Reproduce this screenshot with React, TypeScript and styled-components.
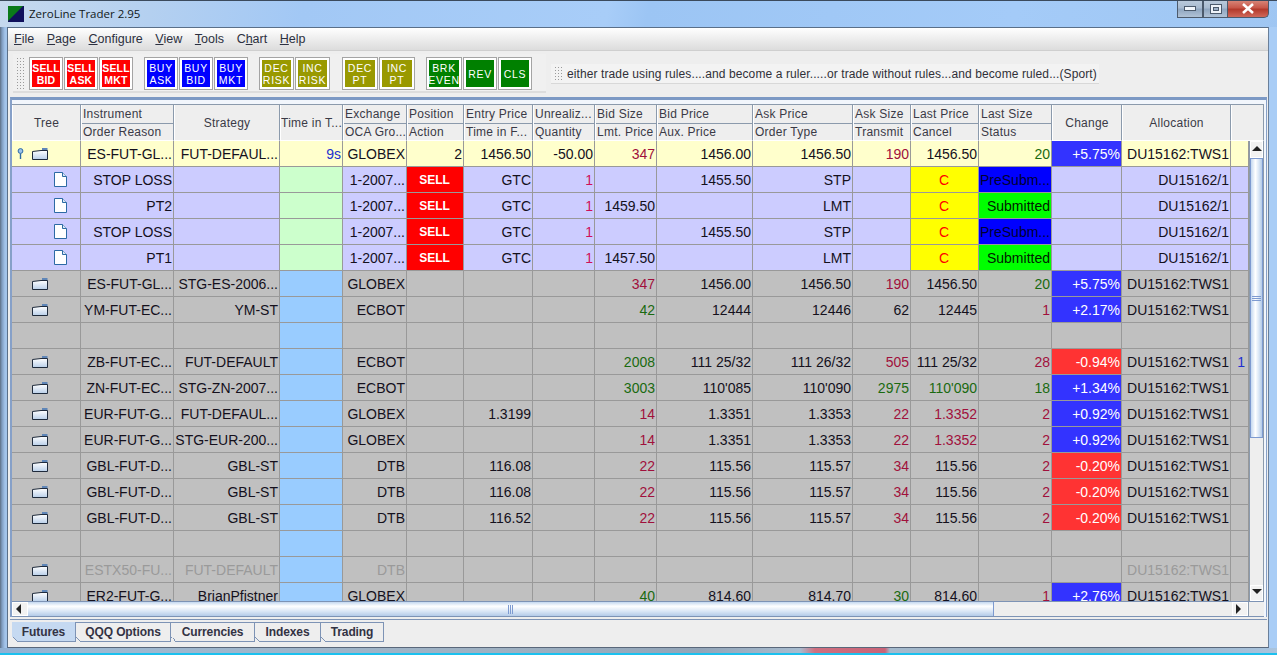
import React from "react";
import styled, { createGlobalStyle } from "styled-components";

const GlobalStyle = createGlobalStyle`
  html, body { margin: 0; padding: 0; background: #a9cdf6; overflow: hidden; }
  * { box-sizing: border-box; }
`;

const COLS = "69px 93px 106px 63px 64px 57px 69px 62px 62px 96px 100px 58px 68px 73px 70px 109px 18px";

const Window = styled.div`
  width: 1277px;
  height: 655px;
  display: flex;
  flex-direction: column;
  padding: 0 7px 0 7px;
  font-family: "Liberation Sans", Arial, sans-serif;
  background: linear-gradient(90deg, #5d6f84 0, #7f9cc0 2px, #a3c4ea 5px, #a9cdf6 100%);
  border-top: 1px solid #3b4a5c;
  border-bottom: 2px solid #1cc0ee;
  overflow: hidden;
`;

const TitleBar = styled.div`
  height: 26px;
  flex: none;
  display: flex;
  align-items: flex-start;
  margin: 0 -7px 0 -7px;
  padding-left: 8px;
  background: linear-gradient(100deg, #c6d9ee 0, #b4d0f0 150px, #a2c8f5 300px, #a8cdf8 600px, #9cc5f4 640px, #a4cbf8 1000px, #9fc6f2 1277px);
`;

const AppIcon = styled.svg`
  width: 16px;
  height: 16px;
  margin-top: 5px;
  flex: none;
`;

const AppTitle = styled.div`
  margin: 5px 0 0 5px;
  font: 11.5px/16px "Open Sans", "Noto Sans", sans-serif;
  color: #101820;
`;

const WinButtons = styled.div`
  margin-left: auto;
  margin-right: 8px;
  display: flex;
  height: 18px;
  margin-top: -1px;
`;

const WinButton = styled.div<{ $w: number; $close?: boolean }>`
  width: ${(p) => p.$w}px;
  height: 18px;
  display: flex;
  align-items: center;
  justify-content: center;
  border: 1px solid #4c5a6c;
  border-top: none;
  border-left-width: ${(p) => (p.$close ? 0 : 1)}px;
  border-radius: ${(p) => (p.$close ? "0 0 5px 0" : "0")};
  background: ${(p) =>
    p.$close
      ? "linear-gradient(#d98a7c 0, #c8584a 45%, #b33a2c 55%, #d0685a 100%)"
      : "linear-gradient(#bccbdc 0, #a9bbd0 45%, #90a6c0 55%, #b0c2d6 100%)"};
`;

const Content = styled.div`
  flex: none;
  height: 621px;
  display: flex;
  flex-direction: column;
  background: #eeeeee;
  border: 1px solid #5a6f88;
  border-bottom: 1px solid #59677a;
  border-right: 1px solid #6a7f99;
  margin-right: 1px;
`;

const BottomGlow = styled.div`
  flex: 1;
  margin: 0 -7px;
  background: linear-gradient(90deg, #8fb0d4 0, #9fb9d2 80px, #9fb1c2 500px, #93a5b8 700px, #a8bccf 800px, #cf6f7f 815px, #c96478 885px, #a5bacd 890px, #98abbd 1100px, #a9c4de 1277px);
`;

const MenuBar = styled.div`
  height: 23px;
  flex: none;
  display: flex;
  gap: 12.6px;
  align-items: center;
  padding: 0 0 0 6px;
  background: linear-gradient(#ffffff 0, #f4f4f4 30%, #dcdcdc 100%);
  border-bottom: 1px solid #cfcfcf;
`;

const MenuItem = styled.span`
  font-size: 12.5px;
  color: #2c3040;
  & u { text-decoration: underline; }
`;

const ToolRow = styled.div`
  height: 46px;
  flex: none;
  display: flex;
  align-items: flex-start;
  padding: 3px 0 0 5px;
`;

const ToolBar = styled.div`
  width: 533px;
  height: 39px;
  display: flex;
  padding: 3px 0 0 3px;
  background: #f0f0f0;
  border-bottom: 2px solid #dddddd;
`;

const Grip = styled.div<{ $w: number; $h: number }>`
  width: ${(p) => p.$w}px;
  height: ${(p) => p.$h}px;
  flex: none;
  background-image: radial-gradient(#9a9a9a 0.7px, transparent 0.8px);
  background-size: 3px 3px;
`;

const ButtonGroup = styled.div<{ $ml: number }>`
  display: flex;
  gap: 1px;
  margin-left: ${(p) => p.$ml}px;
`;

const ToolButton = styled.div<{ $w: number; $bg: string; $bold?: boolean }>`
  width: ${(p) => p.$w}px;
  height: 33px;
  border: 1px solid #a4a4a4;
  padding: 2px;
  background: #fff;
  & > div {
    width: 100%;
    height: 100%;
    background: ${(p) => p.$bg};
    color: #fff;
    display: flex;
    flex-direction: column;
    align-items: center;
    justify-content: center;
    font-size: 10.5px;
    line-height: 12px;
    font-weight: ${(p) => (p.$bold ? 700 : 400)};
    letter-spacing: ${(p) => (p.$bold ? 0.2 : 0.7)}px;
  }
`;

const Ticker = styled.div`
  margin: 10px 0 0 5px;
  width: 548px;
  height: 20px;
  display: flex;
  align-items: center;
  gap: 3px;
  padding-left: 3px;
  background: #f3f3f3;
  border-bottom: 1px solid #d8d8d8;
  font-size: 12px;
  letter-spacing: 0.1px;
  color: #303038;
  white-space: nowrap;
`;

const TablePanel = styled.div`
  flex: none;
  margin: 0 1px 0 2px;
  padding: 4px 2px 0 0;
  height: 520px;
  border: 1px solid #86a0c8;
  border-top: 3px solid #7c99c4;
  border-left-width: 2px;
  border-bottom: none;
  background: #f2f6fc;
  display: flex;
  flex-direction: column;
`;

const HeaderRow = styled.div`
  display: grid;
  grid-template-columns: ${COLS.replace(/18px$/, "33px")};
  height: 37px;
  flex: none;
  border-top: 1px solid #8b9aac;
`;

const HeadCell = styled.div`
  background: #eeeeee;
  border-right: 1px solid #8b9aac;
  border-bottom: 1px solid #ffffff;
  border-left: 1px solid #fff;
  display: flex;
  flex-direction: column;
  overflow: hidden;
`;

const HeadLabel = styled.div<{ $line?: boolean; $single?: boolean }>`
  flex: 1;
  display: flex;
  align-items: center;
  justify-content: ${(p) => (p.$single ? "center" : "flex-start")};
  padding-left: ${(p) => (p.$single ? 0 : 1)}px;
  padding-top: ${(p) => (p.$line ? 1 : 0)}px;
  font-size: 12px;
  letter-spacing: 0.25px;
  color: #3a3a46;
  white-space: nowrap;
  border-bottom: ${(p) => (p.$line ? "1px solid #8b9aac" : "none")};
`;

const GridArea = styled.div`
  flex: 1;
  min-height: 0;
  display: flex;
`;

const Rows = styled.div`
  width: 1237px;
  flex: none;
  overflow: hidden;
`;

const Row = styled.div<{ $bg: string }>`
  display: grid;
  grid-template-columns: ${COLS};
  height: 26px;
  background: ${(p) => p.$bg};
`;

const Cell = styled.div<{ $bg?: string; $color?: string; $align?: string; $bold?: boolean }>`
  display: flex;
  align-items: center;
  justify-content: ${(p) => p.$align || "flex-end"};
  padding: 0 1px 0 0;
  border-right: 1px solid #999999;
  border-bottom: 1px solid #999999;
  background: ${(p) => p.$bg || "transparent"};
  color: ${(p) => p.$color || "#14101c"};
  font-size: ${(p) => (p.$bold ? 12 : 14)}px;
  font-weight: ${(p) => (p.$bold ? 700 : 400)};
  white-space: nowrap;
  overflow: hidden;
`;

const ExtraCell = styled(Cell)`
  padding-right: 3px;
`;

const TreeCell = styled(Cell)<{ $pad: number }>`
  justify-content: flex-start;
  padding: 0 0 0 ${(p) => p.$pad}px;
`;

const PinSlot = styled.svg`
  width: 7px;
  height: 11px;
  margin-right: 8px;
`;

const VScroll = styled.div`
  width: 15px;
  flex: none;
  display: flex;
  flex-direction: column;
  background: #eeeeee;
  border-left: 1px solid #8b9aac;
  border-right: 1px solid #8b9aac;
`;

const ArrowBox = styled.div<{ $w: number; $h: number }>`
  width: ${(p) => p.$w}px;
  height: ${(p) => p.$h}px;
  flex: none;
  display: flex;
  align-items: center;
  justify-content: center;
  background: #f2f2f2;
  border: 1px solid #fff;
`;

const VThumb = styled.div`
  height: 280px;
  flex: none;
  display: flex;
  flex-direction: column;
  align-items: center;
  justify-content: center;
  gap: 1px;
  background: linear-gradient(90deg, #c4d8f0 0, #ffffff 40%, #dbe7f6 70%, #b4cbe8 100%);
  border: 1px solid #7d9ad0;
`;

const GripLine = styled.div`
  width: 9px;
  height: 1px;
  background: #7d9ad0;
`;

const Track = styled.div`
  flex: 1;
`;

const HScroll = styled.div`
  height: 16px;
  flex: none;
  display: flex;
  background: #eeeeee;
  border-top: 1px solid #7d93b5;
  border-bottom: 1px solid #7d93b5;
`;

const HThumb = styled.div`
  width: 966px;
  flex: none;
  display: flex;
  align-items: center;
  justify-content: center;
  gap: 1px;
  background: linear-gradient(#c4d8f0 0, #ffffff 30%, #dbe7f6 65%, #b4cbe8 100%);
  border-right: 1px solid #7d9ad0;
`;

const GripLineV = styled.div`
  width: 1px;
  height: 9px;
  background: #7d9ad0;
`;

const HCorner = styled.div`
  width: 16px;
  height: 100%;
  flex: none;
  border-left: 1px solid #8b9aac;
`;

const TabStrip = styled.div`
  flex: none;
  height: 23px;
  margin: 2px 1px 0 2px;
  padding: 2px 0 0 2px;
  display: flex;
  border-top: 1px solid #7d93b5;
`;

const Tab = styled.div<{ $w: number; $active?: boolean }>`
  position: relative;
  width: ${(p) => p.$w}px;
  height: 20px;
  display: flex;
  align-items: center;
  justify-content: center;
  font-size: 12px;
  font-weight: 700;
  letter-spacing: -0.1px;
  color: #333344;
  background: ${(p) => (p.$active ? "#c5d9f1" : "#eeeeee")};
  border: 1px solid #7d93b5;
  border-left: none;
  border-top: ${(p) => (p.$active ? "none" : "1px solid #7d93b5")};
  &::after {
    content: "";
    position: absolute;
    left: 0;
    bottom: -1px;
    width: 5px;
    height: 5px;
    background: linear-gradient(45deg, #eeeeee 50%, #7d93b5 50%, #7d93b5 60%, transparent 60%);
  }
`;

type Tone = "red" | "green" | "pink" | "blue" | "dim";
const toneColor: Record<Tone, string> = {
  red: "#a0103c",
  green: "#1a6a10",
  pink: "#d0105a",
  blue: "#2030d0",
  dim: "#9a9a9a",
};

type CellDef = string | { t: string; tone?: Tone; kind?: "sell" | "c" | "pre" | "sub" | "up" | "down" };
const r = (t: string): CellDef => ({ t, tone: "red" });
const g = (t: string): CellDef => ({ t, tone: "green" });
const up = (t: string): CellDef => ({ t, kind: "up" });
const down = (t: string): CellDef => ({ t, kind: "down" });
const d = (t: string): CellDef => ({ t, tone: "dim" });

const order = (reason: string, lmt: string, aux: string, type: string, pre: boolean): CellDef[] => [
  reason, "", "", "1-2007...", { t: "SELL", kind: "sell" }, "GTC", { t: "1", tone: "pink" }, lmt, aux, type, "",
  { t: "C", kind: "c" }, pre ? { t: "PreSubm...", kind: "pre" } : { t: "Submitted", kind: "sub" }, "", "DU15162/1", "",
];

const DU = "DU15162:TWS1";

type RowDef = { type: "main" | "order" | "gray"; cells: CellDef[] };

const rows: RowDef[] = [
  { type: "main", cells: ["ES-FUT-GL...", "FUT-DEFAUL...", { t: "9s", tone: "blue" }, "GLOBEX", "2", "1456.50", "-50.00", r("347"), "1456.00", "1456.50", r("190"), "1456.50", g("20"), up("+5.75%"), DU, ""] },
  { type: "order", cells: order("STOP LOSS", "", "1455.50", "STP", true) },
  { type: "order", cells: order("PT2", "1459.50", "", "LMT", false) },
  { type: "order", cells: order("STOP LOSS", "", "1455.50", "STP", true) },
  { type: "order", cells: order("PT1", "1457.50", "", "LMT", false) },
  { type: "gray", cells: ["ES-FUT-GL...", "STG-ES-2006...", "", "GLOBEX", "", "", "", r("347"), "1456.00", "1456.50", r("190"), "1456.50", g("20"), up("+5.75%"), DU, ""] },
  { type: "gray", cells: ["YM-FUT-EC...", "YM-ST", "", "ECBOT", "", "", "", g("42"), "12444", "12446", "62", "12445", r("1"), up("+2.17%"), DU, ""] },
  { type: "gray", cells: [] },
  { type: "gray", cells: ["ZB-FUT-EC...", "FUT-DEFAULT", "", "ECBOT", "", "", "", g("2008"), "111 25/32", "111 26/32", r("505"), "111 25/32", r("28"), down("-0.94%"), DU, { t: "1", tone: "blue" }] },
  { type: "gray", cells: ["ZN-FUT-EC...", "STG-ZN-2007...", "", "ECBOT", "", "", "", g("3003"), "110'085", "110'090", g("2975"), g("110'090"), g("18"), up("+1.34%"), DU, ""] },
  { type: "gray", cells: ["EUR-FUT-G...", "FUT-DEFAUL...", "", "GLOBEX", "", "1.3199", "", r("14"), "1.3351", "1.3353", r("22"), r("1.3352"), r("2"), up("+0.92%"), DU, ""] },
  { type: "gray", cells: ["EUR-FUT-G...", "STG-EUR-200...", "", "GLOBEX", "", "", "", r("14"), "1.3351", "1.3353", r("22"), r("1.3352"), r("2"), up("+0.92%"), DU, ""] },
  { type: "gray", cells: ["GBL-FUT-D...", "GBL-ST", "", "DTB", "", "116.08", "", r("22"), "115.56", "115.57", r("34"), "115.56", r("2"), down("-0.20%"), DU, ""] },
  { type: "gray", cells: ["GBL-FUT-D...", "GBL-ST", "", "DTB", "", "116.08", "", r("22"), "115.56", "115.57", r("34"), "115.56", r("2"), down("-0.20%"), DU, ""] },
  { type: "gray", cells: ["GBL-FUT-D...", "GBL-ST", "", "DTB", "", "116.52", "", r("22"), "115.56", "115.57", r("34"), "115.56", r("2"), down("-0.20%"), DU, ""] },
  { type: "gray", cells: [] },
  { type: "gray", cells: [d("ESTX50-FU..."), d("FUT-DEFAULT"), "", d("DTB"), "", "", "", "", "", "", "", "", "", "", d(DU), ""] },
  { type: "gray", cells: ["ER2-FUT-G...", "BrianPfistner", "", "GLOBEX", "", "", "", g("40"), "814.60", "814.70", g("30"), "814.60", r("1"), up("+2.76%"), DU, ""] },
];

const rowBg = { main: "#ffffcc", order: "#ccccff", gray: "#c0c0c0" };
const timeBg = { main: "#ffffcc", order: "#ccffcc", gray: "#99ccff" };

const kindStyle = {
  sell: { $bg: "#ff0000", $color: "#ffffff", $align: "center", $bold: true },
  c: { $bg: "#ffff00", $color: "#ff0000", $align: "center" },
  pre: { $bg: "#0000ff", $color: "#000030" },
  sub: { $bg: "#00ff00", $color: "#002000" },
  up: { $bg: "#3333ff", $color: "#ffffff" },
  down: { $bg: "#ff3333", $color: "#ffffff" },
};

const headers: string[][] = [
  ["Tree"], ["Instrument", "Order Reason"], ["Strategy"], ["Time in T..."], ["Exchange", "OCA Gro..."],
  ["Position", "Action"], ["Entry Price", "Time in F..."], ["Unrealiz...", "Quantity"], ["Bid Size", "Lmt. Price"],
  ["Bid Price", "Aux. Price"], ["Ask Price", "Order Type"], ["Ask Size", "Transmit"], ["Last Price", "Cancel"],
  ["Last Size", "Status"], ["Change"], ["Allocation"], [""],
];

const toolGroups = [
  { ml: 3, bold: true, bg: "#ff0000", items: [["SELL", "BID", 34], ["SELL", "ASK", 34], ["SELL", "MKT", 34]] },
  { ml: 11, bg: "#0000ff", items: [["BUY", "ASK", 34], ["BUY", "BID", 34], ["BUY", "MKT", 34]] },
  { ml: 11, bg: "#999900", items: [["DEC", "RISK", 35], ["INC", "RISK", 35]] },
  { ml: 12, bg: "#999900", items: [["DEC", "PT", 36], ["INC", "PT", 36]] },
  { ml: 11, bg: "#008000", items: [["BRK", "EVEN", 36], ["REV", "", 34], ["CLS", "", 34]] },
];

const menus = [
  ["F", "ile"], ["P", "age"], ["C", "onfigure"], ["V", "iew"], ["T", "ools"], ["Ch", "art", "a"], ["H", "elp"],
];

const tabs: [string, number][] = [["Futures", 64], ["QQQ Options", 95], ["Currencies", 84], ["Indexes", 66], ["Trading", 63]];

function Folder() {
  return (
    <svg width="16" height="12" viewBox="0 0 16 12">
      <defs>
        <linearGradient id="fold" x1="0" y1="0" x2="0" y2="1">
          <stop offset="0" stopColor="#ffffff" />
          <stop offset="1" stopColor="#b9cfe9" />
        </linearGradient>
      </defs>
      <path d="M10 0h5.500v3h-5.500z" fill="#5f86b8" />
      <path d="M0.500 3.500L9 2.500h6.500v9H0.500z" fill="url(#fold)" stroke="#1f2b3c" />
    </svg>
  );
}

function Doc() {
  return (
    <svg width="13" height="15" viewBox="0 0 13 15">
      <path d="M0.5 0.5h8l4 4v10h-12z" fill="#ffffff" stroke="#2d6aa5" />
      <path d="M8.5 0.5v4h4" fill="#dbe7f4" stroke="#2d6aa5" />
    </svg>
  );
}

function Pin() {
  return (
    <PinSlot viewBox="0 0 7 11">
      <circle cx="3.5" cy="3" r="2.4" fill="#9cc2ea" stroke="#2d6aa5" />
      <path d="M3.5 5.5V11" stroke="#2d6aa5" strokeWidth="1.4" />
    </PinSlot>
  );
}

function Arrow({ dir }: { dir: "up" | "down" | "left" | "right" }) {
  const pts = {
    up: "0,6 5,1 10,6",
    down: "0,1 5,6 10,1",
    left: "6,0 1,5 6,10",
    right: "1,0 6,5 1,10",
  };
  return (
    <svg width="10" height="10" viewBox="0 0 10 10">
      <polygon points={pts[dir]} fill="#222" />
    </svg>
  );
}

function DataRow({ row }: { row: RowDef }) {
  const tree = row.type === "order" ? (
    <TreeCell $pad={42}><Doc /></TreeCell>
  ) : row.cells.length === 0 ? (
    <TreeCell $pad={20} />
  ) : (
    <TreeCell $pad={row.type === "main" ? 5 : 20}>
      {row.type === "main" && <Pin />}
      <Folder />
    </TreeCell>
  );
  const filled = row.cells.length ? row.cells : Array.from({ length: 16 }, () => "");
  return (
    <Row $bg={rowBg[row.type]}>
      {tree}
      {filled.map((c, i) => {
        const def = typeof c === "string" ? { t: c } : c;
        const kind = "kind" in def && def.kind ? kindStyle[def.kind] : {};
        const tone = "tone" in def && def.tone ? toneColor[def.tone] : undefined;
        if (i === 2) return <Cell key={i} $bg={timeBg[row.type]} $color={tone}>{def.t}</Cell>;
        if (i === 15) return <ExtraCell key={i} $color={tone}>{def.t}</ExtraCell>;
        return <Cell key={i} $color={tone} {...kind}>{def.t}</Cell>;
      })}
    </Row>
  );
}

export default function App() {
  return (
    <>
      <GlobalStyle />
      <Window>
        <TitleBar>
          <AppIcon viewBox="0 0 16 16">
            <rect width="16" height="16" fill="#10105c" />
            <polygon points="0,0 15,0 0,15" fill="#0a7a1a" />
          </AppIcon>
          <AppTitle>ZeroLine Trader 2.95</AppTitle>
          <WinButtons>
            <WinButton $w={26}>
              <svg width="12" height="6" viewBox="0 0 12 6"><rect x="0.5" y="0.5" width="11" height="4" fill="#f2f6fb" stroke="#4c5a6c" /></svg>
            </WinButton>
            <WinButton $w={25}>
              <svg width="12" height="10" viewBox="0 0 12 10"><rect x="0.5" y="0.5" width="11" height="9" fill="#eef3f9" stroke="#4c5a6c" /><rect x="3.5" y="3.5" width="5" height="3" fill="#9fb2c8" stroke="#4c5a6c" /></svg>
            </WinButton>
            <WinButton $w={41} $close>
              <svg width="14" height="11" viewBox="0 0 14 11"><path d="M2 1l10 9M12 1L2 10" stroke="#ffffff" strokeWidth="2.6" /></svg>
            </WinButton>
          </WinButtons>
        </TitleBar>
        <Content>
          <MenuBar>
            {menus.map(([a, b, c]) => (
              <MenuItem key={a + b}>
                {c ? <>C<u>h</u>art</> : <><u>{a}</u>{b}</>}
              </MenuItem>
            ))}
          </MenuBar>
          <ToolRow>
            <ToolBar>
              <Grip $w={10} $h={33} />
              {toolGroups.map((grp, gi) => (
                <ButtonGroup key={gi} $ml={grp.ml}>
                  {grp.items.map(([a, b, w]) => (
                    <ToolButton key={String(a) + b} $w={w as number} $bg={grp.bg} $bold={grp.bold}>
                      <div>
                        <span>{a}</span>
                        {b && <span>{b}</span>}
                      </div>
                    </ToolButton>
                  ))}
                </ButtonGroup>
              ))}
            </ToolBar>
            <Ticker>
              <Grip $w={10} $h={15} />
              either trade using rules....and become a ruler.....or trade without rules...and become ruled...(Sport)
            </Ticker>
          </ToolRow>
          <TablePanel>
            <HeaderRow>
              {headers.map((h, i) => (
                <HeadCell key={i}>
                  {h.length === 1 ? (
                    <HeadLabel $single>{h[0]}</HeadLabel>
                  ) : (
                    <>
                      <HeadLabel $line>{h[0]}</HeadLabel>
                      <HeadLabel>{h[1]}</HeadLabel>
                    </>
                  )}
                </HeadCell>
              ))}
            </HeaderRow>
            <GridArea>
              <Rows>
                {rows.map((row, i) => (
                  <DataRow key={i} row={row} />
                ))}
              </Rows>
              <VScroll>
                <ArrowBox $w={13} $h={17}><Arrow dir="up" /></ArrowBox>
                <VThumb>
                  <GripLine /><GripLine /><GripLine />
                </VThumb>
                <Track />
                <ArrowBox $w={13} $h={16}><Arrow dir="down" /></ArrowBox>
              </VScroll>
            </GridArea>
            <HScroll>
              <ArrowBox $w={16} $h={14}><Arrow dir="left" /></ArrowBox>
              <HThumb>
                <GripLineV /><GripLineV /><GripLineV />
              </HThumb>
              <Track />
              <ArrowBox $w={16} $h={14}><Arrow dir="right" /></ArrowBox>
              <HCorner />
            </HScroll>
          </TablePanel>
          <TabStrip>
            {tabs.map(([t, w], i) => (
              <Tab key={t} $w={w} $active={i === 0}>{t}</Tab>
            ))}
          </TabStrip>
        </Content>
        <BottomGlow />
      </Window>
    </>
  );
}
